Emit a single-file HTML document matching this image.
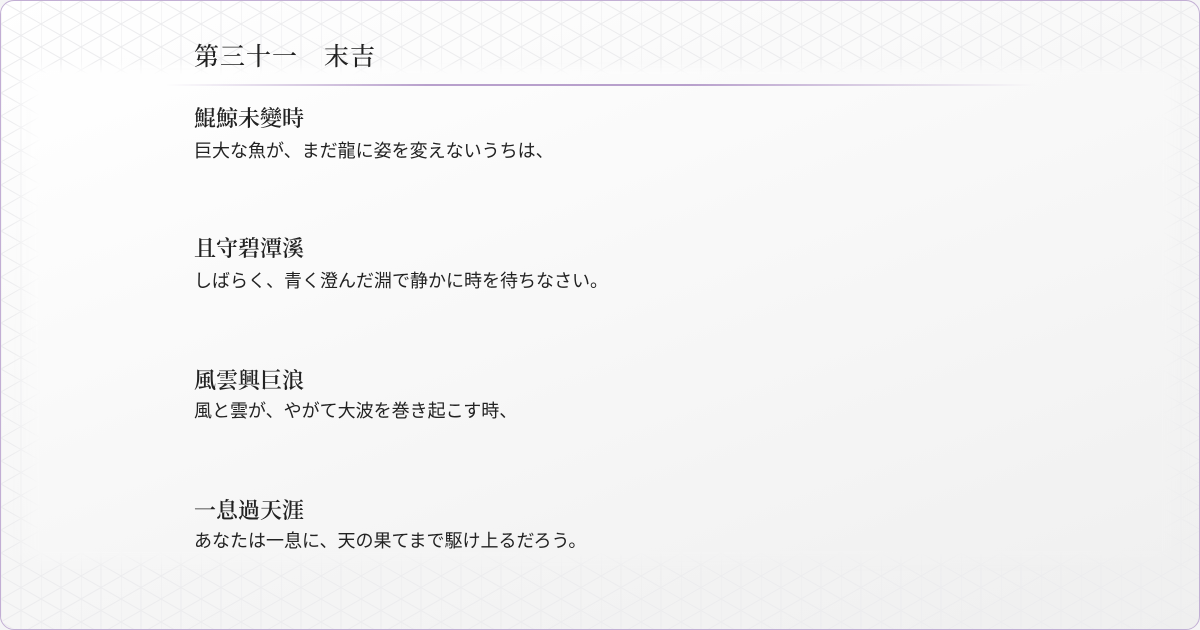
<!DOCTYPE html>
<html><head><meta charset="utf-8"><style>
html,body{margin:0;padding:0;}
body{width:1200px;height:630px;overflow:hidden;position:relative;background:#f4f4f5;}
.frame{position:absolute;left:0;top:0;width:1198px;height:628px;border:1px solid #c2aed4;border-radius:14px;overflow:hidden;
background:linear-gradient(160deg,#ffffff 0%,#f7f7f7 50%,#efefef 100%);}
svg.pat{position:absolute;left:0;top:0;}
.inner{position:absolute;left:10px;top:60px;width:1180px;height:510px;background:linear-gradient(160deg,#ffffff 0%,#f6f6f6 60%,#f0f0f0 100%);
-webkit-mask-image:linear-gradient(90deg,transparent 0,#000 30px,#000 1150px,transparent 1180px),linear-gradient(180deg,transparent 0,#000 14px,#000 490px,transparent 510px);
-webkit-mask-composite:source-in;mask-composite:intersect;}
.title{position:absolute;left:193px;top:36px;font:500 25px "Liberation Serif","Noto Serif CJK SC",serif;color:#222;letter-spacing:1px;}
.line{position:absolute;left:165px;top:83px;width:870px;height:2px;background:linear-gradient(90deg,rgba(180,150,200,0),#b8a0cc 30%,#b8a0cc 60%,rgba(180,150,200,0));}
.h{position:absolute;left:193px;font:600 22px "Liberation Serif","Noto Serif CJK SC",serif;color:#222;}
.p{position:absolute;left:193px;font:18px "Liberation Sans","Noto Sans CJK JP",sans-serif;color:#222;}
</style></head><body>
<div class="frame">
<svg class="pat" width="1200" height="630">
<defs><pattern id="t" width="40" height="46" patternUnits="userSpaceOnUse">
<path d="M0 0L40 23M40 0L0 23M0 23L40 46M40 23L0 46M20 0V46M0 0V46" stroke="#ececee" stroke-width="1" fill="none"/>
</pattern></defs>
<rect width="1200" height="630" fill="url(#t)"/>
</svg>
<div class="inner"></div>
<div class="title">第三十一　末吉</div>
<div class="line"></div>
<div class="h" style="top:101px">鯤鯨未變時</div>
<div class="p" style="top:136px">巨大な魚が、まだ龍に姿を変えないうちは、</div>
<div class="h" style="top:231px">且守碧潭溪</div>
<div class="p" style="top:266px">しばらく、青く澄んだ淵で静かに時を待ちなさい。</div>
<div class="h" style="top:363px">風雲興巨浪</div>
<div class="p" style="top:396px">風と雲が、やがて大波を巻き起こす時、</div>
<div class="h" style="top:493px">一息過天涯</div>
<div class="p" style="top:526px">あなたは一息に、天の果てまで駆け上るだろう。</div>
</div>
</body></html>
